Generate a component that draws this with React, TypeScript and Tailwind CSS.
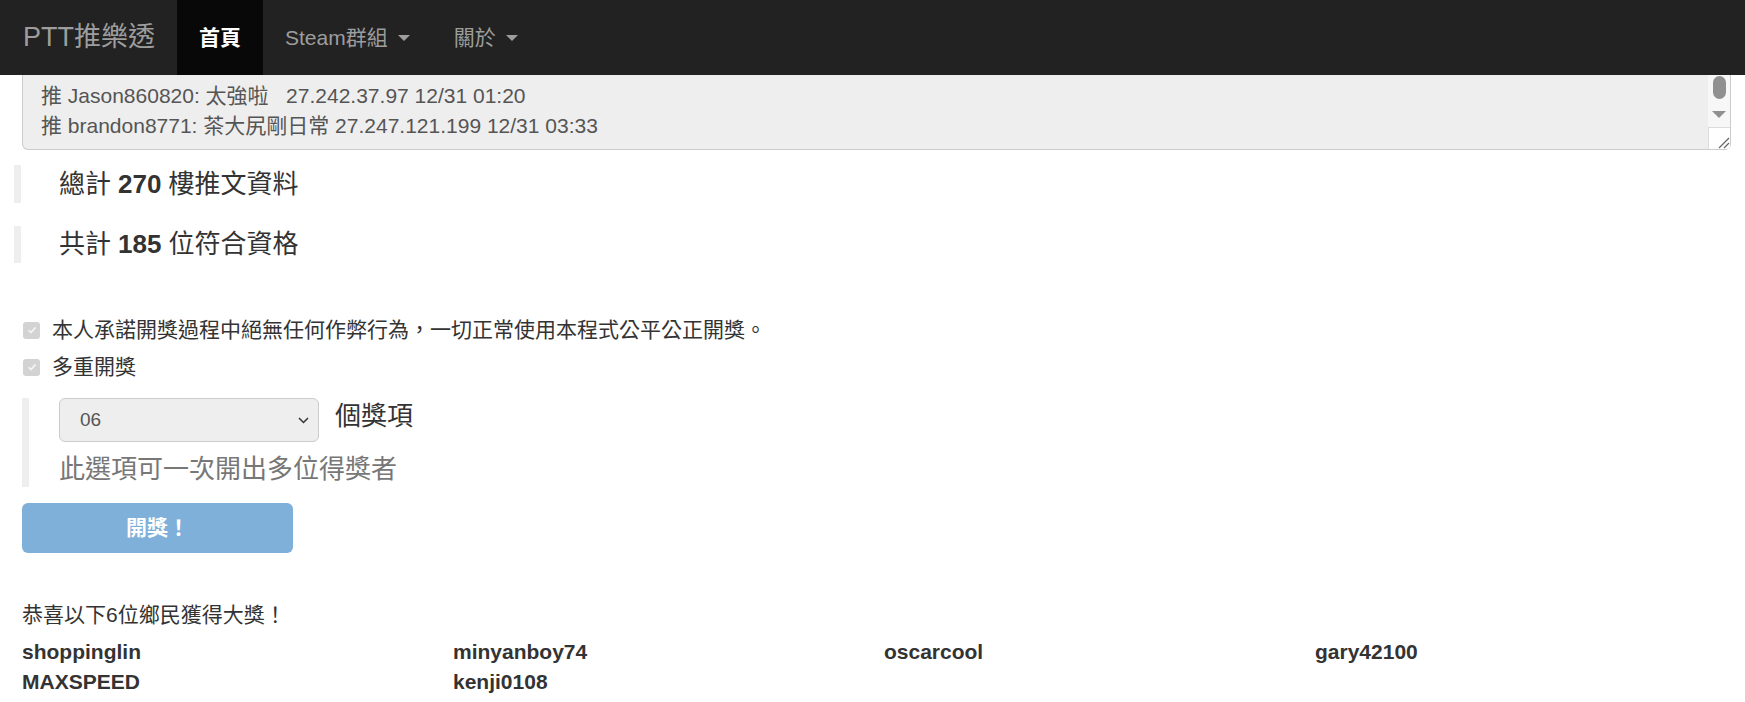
import React from 'react';

const winners = ['shoppinglin', 'minyanboy74', 'oscarcool', 'gary42100', 'MAXSPEED', 'kenji0108'];

function Caret() {
  return (
    <span className="ml-[10px] inline-block h-0 w-0 border-x-[6px] border-t-[6px] border-x-transparent border-t-[#9d9d9d] align-middle" />
  );
}

function CheckBox() {
  return (
    <span className="flex h-[17px] w-[17px] items-center justify-center rounded-[3px] bg-[#d3d3d3]">
      <svg width="12" height="12" viewBox="0 0 12 12">
        <polyline points="2.5,6.2 5,8.6 9.6,3.4" fill="none" stroke="#f4f4f4" strokeWidth="1.6" />
      </svg>
    </span>
  );
}

export default function App() {
  return (
    <div className="min-h-screen bg-white font-['Liberation_Sans','Noto_Sans_CJK_TC',sans-serif] text-[#333]">
      {/* navbar */}
      <nav className="flex h-[75px] items-stretch bg-[#222]">
        <div className="flex items-center pl-[23px] pr-[22px] text-[27px] text-[#9d9d9d]">PTT推樂透</div>
        <div className="flex items-center bg-[#080808] px-[22px] text-[21px] font-bold text-white">首頁</div>
        <div className="flex items-center px-[22px] text-[21px] text-[#9d9d9d]">
          Steam群組 <Caret />
        </div>
        <div className="flex items-center px-[22px] text-[21px] text-[#9d9d9d]">
          關於 <Caret />
        </div>
      </nav>

      {/* scrolled textarea */}
      <div className="ml-[22px] mr-[14px] flex h-[75px] rounded-b-[6px] border-x border-b border-[#ccc] bg-[#eee]">
        <div className="flex-1 whitespace-pre pl-[18px] pt-[6px] text-[21px] leading-[30px] text-[#555]">
          <div>推 Jason860820: 太強啦   27.242.37.97 12/31 01:20</div>
          <div>推 brandon8771: 茶大尻剛日常 27.247.121.199 12/31 03:33</div>
        </div>
        <div className="flex w-[22px] flex-col items-center bg-[#f7f7f7]">
          <div className="mt-[1px] h-[24px] w-[13px] rounded-full bg-[#909090]" />
          <div className="mt-[12px] h-0 w-0 border-x-[7px] border-t-[7px] border-x-transparent border-t-[#909090]" />
          <div className="mt-[9px] flex h-[22px] w-[22px] items-end justify-end rounded-br-[5px] border-l border-t border-[#dcdcdc] bg-white">
            <svg width="14" height="14" viewBox="0 0 14 14">
              <line x1="3" y1="13" x2="13" y2="3" stroke="#666" strokeWidth="1.3" />
              <line x1="8" y1="13" x2="13" y2="8" stroke="#666" strokeWidth="1.3" />
            </svg>
          </div>
        </div>
      </div>

      {/* totals */}
      <div className="ml-[14px] mt-[15px] flex h-[38px] items-center border-l-[7px] border-[#eee] pl-[38px] text-[26px]">
        總計 <b className="mx-[7px]">270</b> 樓推文資料
      </div>
      <div className="ml-[14px] mt-[23px] flex h-[37px] items-center border-l-[7px] border-[#eee] pl-[38px] text-[26px]">
        共計 <b className="mx-[7px]">185</b> 位符合資格
      </div>

      {/* options */}
      <div className="ml-[23px] mt-[52px] flex h-[30px] items-center gap-[12px] text-[21px]">
        <CheckBox />
        <span>本人承諾開獎過程中絕無任何作弊行為，一切正常使用本程式公平公正開獎。</span>
      </div>
      <div className="ml-[23px] mt-[7px] flex h-[30px] items-center gap-[12px] text-[21px]">
        <CheckBox />
        <span>多重開獎</span>
      </div>

      <div className="ml-[22px] mt-[16px] h-[89px] border-l-[7px] border-[#eee] pl-[30px]">
        <div className="flex items-center gap-[16px]">
          <div className="flex h-[44px] w-[260px] items-center justify-between rounded-[6px] border border-[#ccc] bg-[#eee] pl-[20px] pr-[9px] text-[19px] text-[#555]">
            <span>06</span>
            <svg width="11" height="7" viewBox="0 0 11 7">
              <polyline points="1,1 5.5,5.5 10,1" fill="none" stroke="#333" strokeWidth="1.5" />
            </svg>
          </div>
          <span className="-mt-[8px] text-[26px]">個獎項</span>
        </div>
        <div className="mt-[9px] text-[26px] leading-[36px] text-[#777]">此選項可一次開出多位得獎者</div>
      </div>

      <div className="ml-[22px] mt-[16px] flex h-[50px] w-[271px] items-center justify-center rounded-[6px] bg-[#7fb0d9] text-[21px] font-bold text-white">
        開獎！
      </div>

      {/* result */}
      <div className="ml-[22px] mt-[47px] text-[21px] leading-[30px]">恭喜以下6位鄉民獲得大獎！</div>
      <div className="ml-[22px] mt-[7px] grid grid-cols-[431px_431px_431px_431px] text-[21px] font-bold leading-[30px]">
        {winners.map((w) => (
          <div key={w}>{w}</div>
        ))}
      </div>
    </div>
  );
}
